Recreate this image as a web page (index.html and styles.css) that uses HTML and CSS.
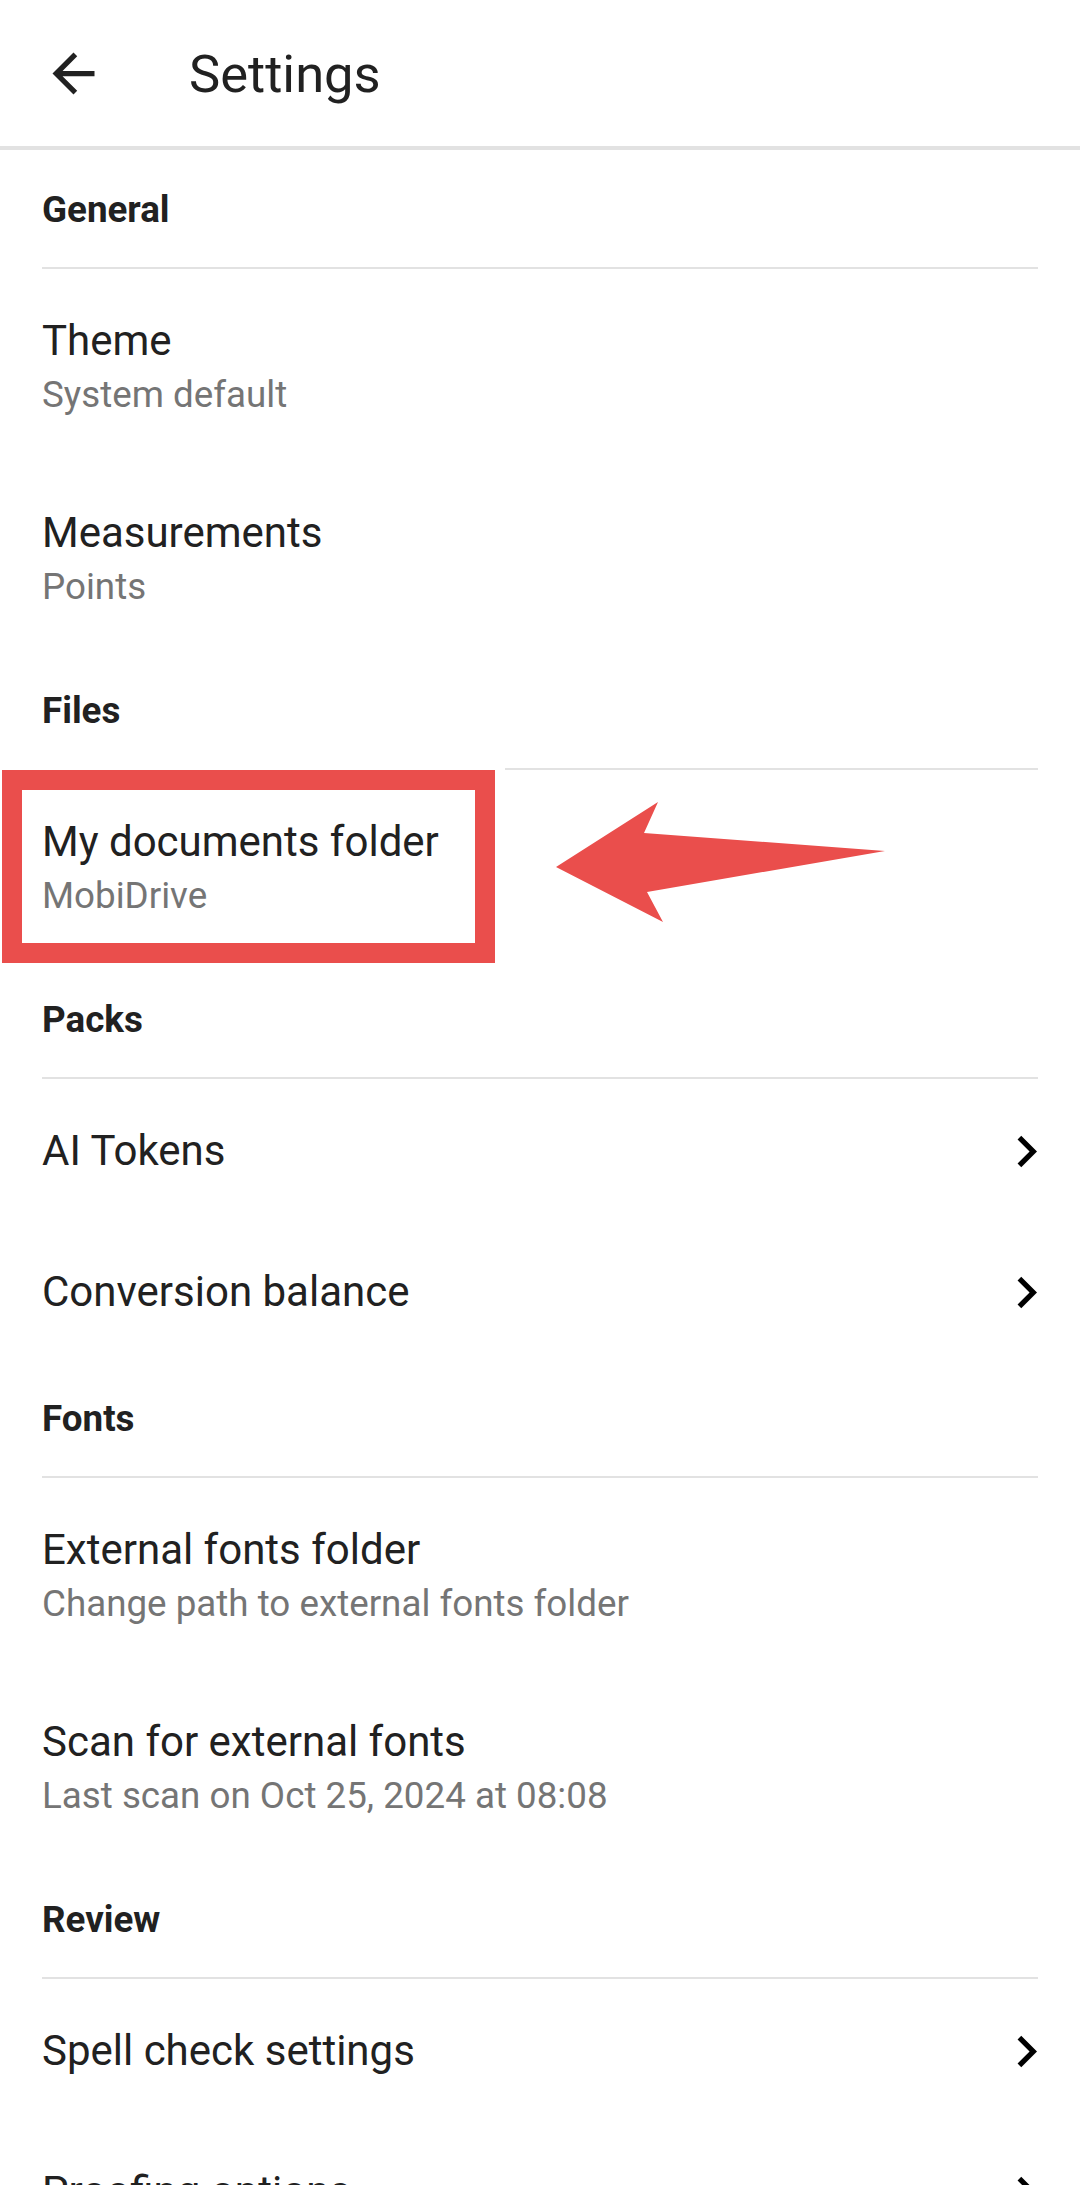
FILE: index.html
```html
<!DOCTYPE html>
<html lang="en">
<head>
  <meta charset="UTF-8">
  <meta name="viewport" content="width=device-width, initial-scale=1.0">
  <title>Settings</title>
  <link rel="stylesheet" href="styles.css">
</head>
<body>
  <!-- Toolbar -->
  <div class="toolbar">
    <svg class="back-icon" viewBox="0 0 24 24">
      <path d="M20 11H7.83l5.59-5.59L12 4l-8 8 8 8 1.41-1.41L7.83 13H20v-2z"/>
    </svg>
    <h1 class="toolbar-title">Settings</h1>
  </div>

  <div class="settings-list">
    <!-- General -->
    <div class="category first">General</div>
    <div class="item">
      <div class="item-text">
        <div class="item-title">Theme</div>
        <div class="item-summary">System default</div>
      </div>
    </div>
    <div class="item">
      <div class="item-text">
        <div class="item-title">Measurements</div>
        <div class="item-summary">Points</div>
      </div>
    </div>

    <!-- Files -->
    <div class="category">Files</div>
    <div class="item highlighted">
      <div class="item-text">
        <div class="item-title">My documents folder</div>
        <div class="item-summary">MobiDrive</div>
      </div>
      <div class="mark-box"></div>
      <svg class="mark-arrow" viewBox="0 0 340 135">
        <polygon points="6,72 108,7 94,38 335,56 97,97 113,127"/>
      </svg>
    </div>

    <!-- Packs -->
    <div class="category">Packs</div>
    <div class="item">
      <div class="item-text">
        <div class="item-title">AI Tokens</div>
      </div>
      <svg class="chevron" viewBox="0 0 24 24"><path d="M10 6L8.59 7.41 13.17 12l-4.58 4.59L10 18l6-6z"/></svg>
    </div>
    <div class="item">
      <div class="item-text">
        <div class="item-title">Conversion balance</div>
      </div>
      <svg class="chevron" viewBox="0 0 24 24"><path d="M10 6L8.59 7.41 13.17 12l-4.58 4.59L10 18l6-6z"/></svg>
    </div>

    <!-- Fonts -->
    <div class="category">Fonts</div>
    <div class="item">
      <div class="item-text">
        <div class="item-title">External fonts folder</div>
        <div class="item-summary">Change path to external fonts folder</div>
      </div>
    </div>
    <div class="item">
      <div class="item-text">
        <div class="item-title">Scan for external fonts</div>
        <div class="item-summary">Last scan on Oct 25, 2024 at 08:08</div>
      </div>
    </div>

    <!-- Review -->
    <div class="category">Review</div>
    <div class="item">
      <div class="item-text">
        <div class="item-title">Spell check settings</div>
      </div>
      <svg class="chevron" viewBox="0 0 24 24"><path d="M10 6L8.59 7.41 13.17 12l-4.58 4.59L10 18l6-6z"/></svg>
    </div>
    <div class="item">
      <div class="item-text">
        <div class="item-title">Proofing options</div>
      </div>
      <svg class="chevron" viewBox="0 0 24 24"><path d="M10 6L8.59 7.41 13.17 12l-4.58 4.59L10 18l6-6z"/></svg>
    </div>
  </div>
</body>
</html>
```

FILE: styles.css
```css
body {
  margin: 0;
  font-family: Roboto, "Noto Sans", sans-serif;
  background-color: #fff;
  color: #212121;
  overflow: hidden;
}
.toolbar {
  height: 146px;
  display: flex;
  align-items: center;
  padding-left: 42px;
  border-bottom: 4px solid #e2e2e2;
}
.back-icon {
  width: 63px;
  height: 63px;
  fill: #212121;
}
.toolbar-title {
  margin: 2px 0 0 84px;
  font-size: 52.5px;
  font-weight: 400;
  line-height: 64px;
}
.category {
  margin: 0 42px;
  padding: 36px 0 35px;
  font-size: 36.75px;
  font-weight: 700;
  line-height: 44px;
  border-bottom: 2px solid #e2e2e2;
}
.category.first {
  margin-top: 2px;
}
.item {
  position: relative;
  display: flex;
  align-items: center;
  padding: 44px 22px 41px 42px;
}
.item-text {
  flex: 1;
}
.item-title {
  font-size: 42px;
  line-height: 56px;
}
.item-summary {
  font-size: 36.75px;
  line-height: 51px;
  color: #757575;
}
.chevron {
  width: 63px;
  height: 63px;
  margin: -4px 0 -4px;
  fill: #000;
}
/* red annotation over "My documents folder" */
.mark-box {
  position: absolute;
  left: 2px;
  top: 0;
  width: 493px;
  height: 193px;
  box-sizing: border-box;
  border: 20px solid #ea4e4c;
  box-shadow: 0 0 0 10px #fff;
}
.mark-arrow {
  position: absolute;
  left: 550px;
  top: 25px;
  width: 340px;
  height: 135px;
  fill: #ea4e4c;
}
```
